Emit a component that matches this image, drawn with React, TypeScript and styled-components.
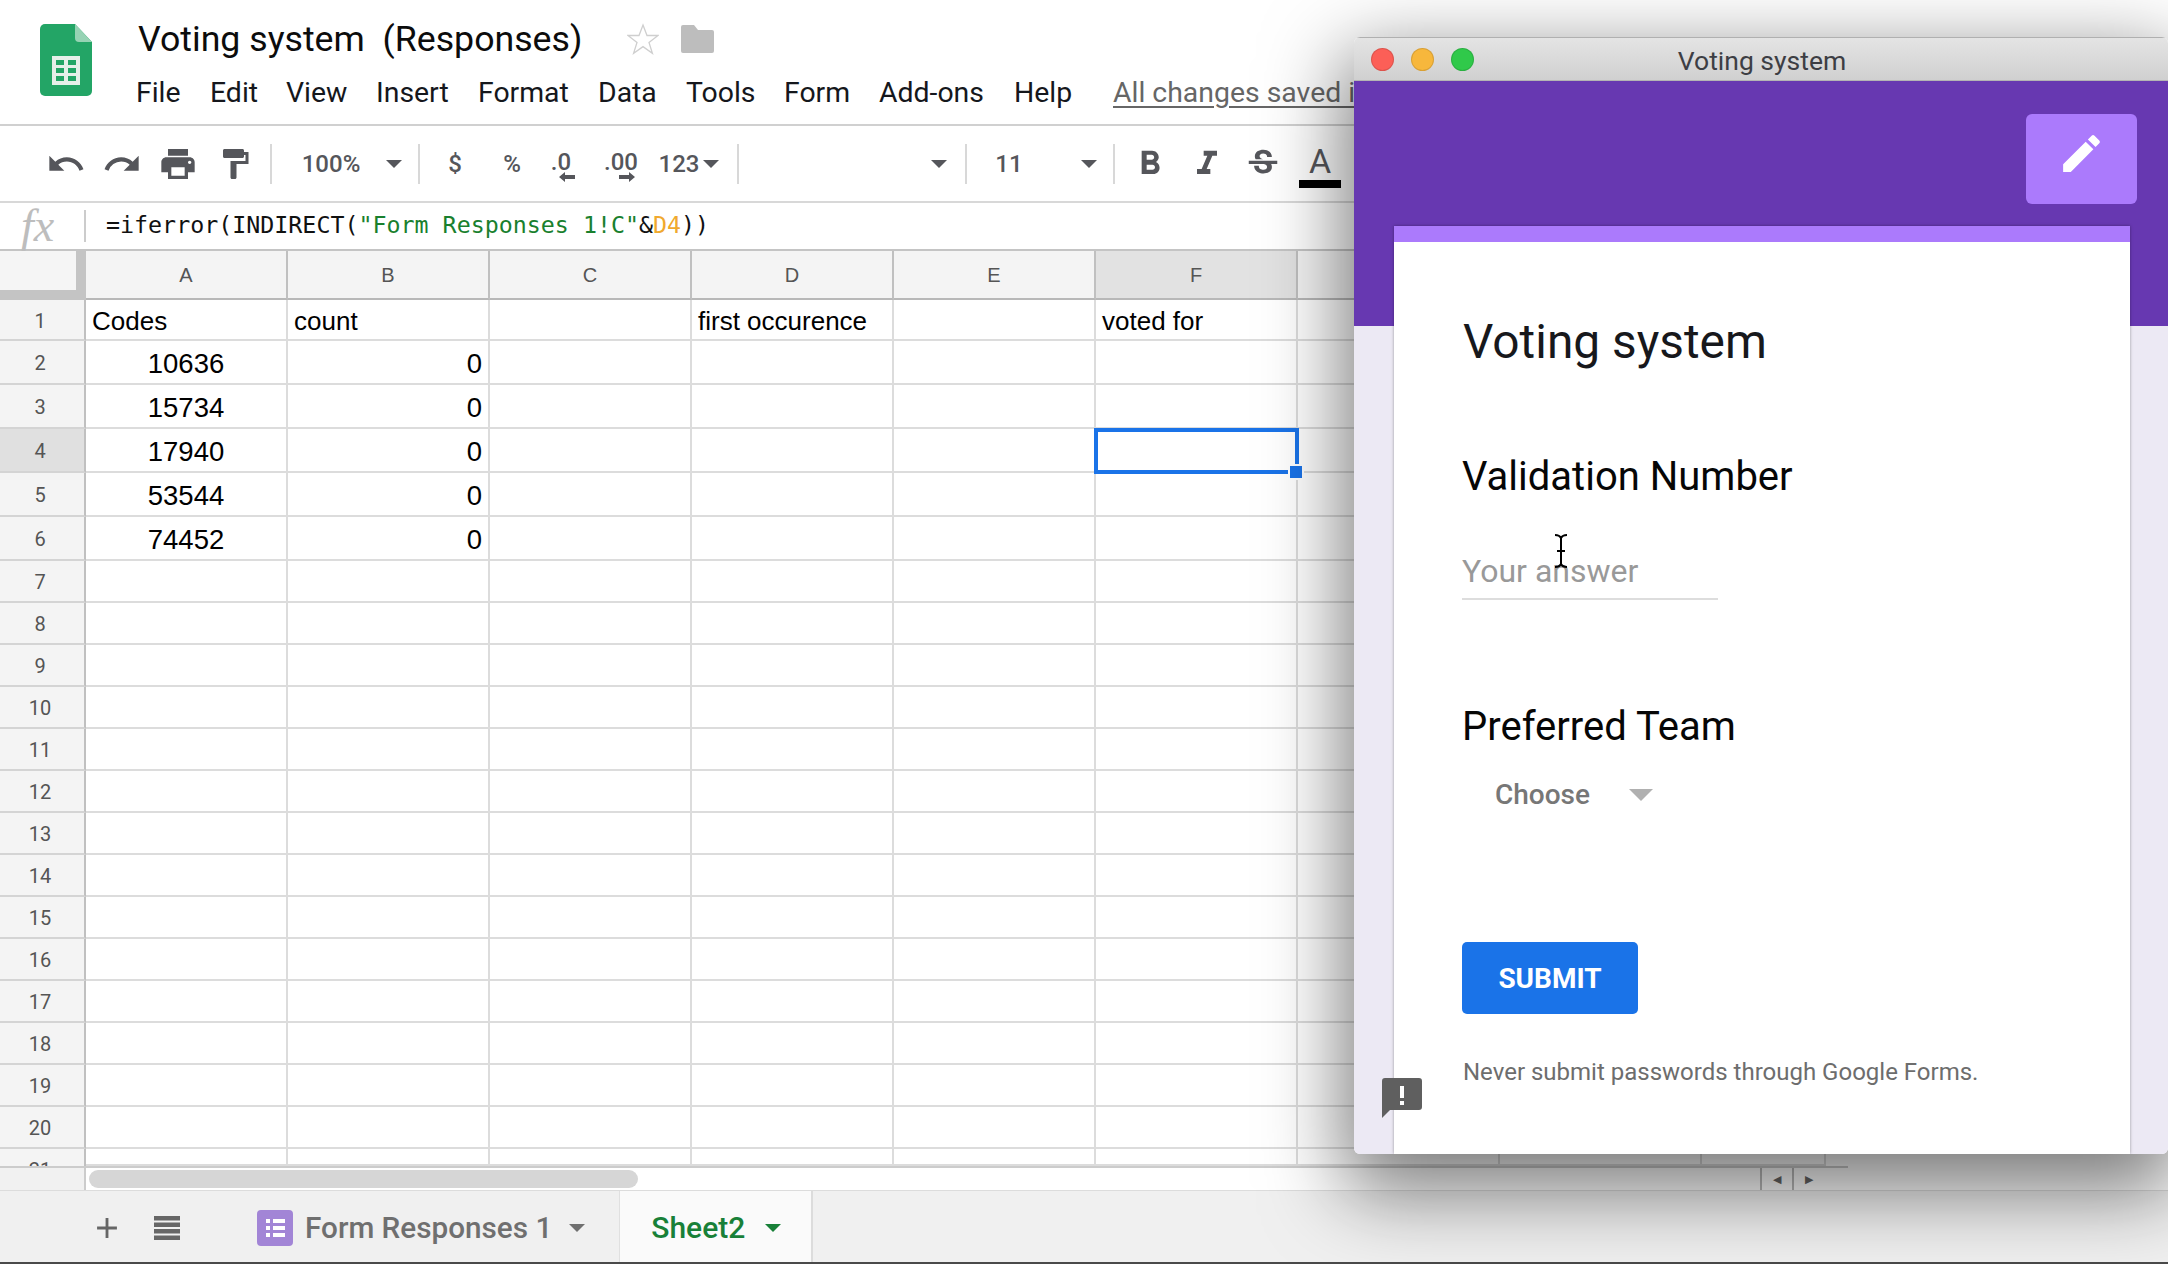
import React from "react";
import styled, { createGlobalStyle } from "styled-components";
import {
  MdUndo, MdRedo, MdPrint, MdFormatPaint, MdFormatBold, MdFormatItalic,
  MdStrikethroughS, MdEdit, MdAdd,
} from "react-icons/md";

const Global = createGlobalStyle`
  html, body { margin: 0; padding: 0; background: #fff; overflow: hidden; }
  * { box-sizing: border-box; }
`;

const Page = styled.div`
  position: relative; width: 2168px; height: 1264px; overflow: hidden;
  font-family: Roboto, "Liberation Sans", sans-serif; color: #111;
  display: flex; flex-direction: column; background: #fff;
`;

/* ---- doc header ---- */
const Header = styled.header`
  height: 126px; flex: none; display: flex; align-items: flex-start;
  padding: 24px 0 0 40px; border-bottom: 2px solid #d0d0d0;
`;
const TitleBlock = styled.div`
  margin-left: 46px; display: flex; flex-direction: column;
`;
const TitleRow = styled.div`
  display: flex; align-items: center; height: 30px;
`;
const DocTitle = styled.div`
  font-size: 35.7px; line-height: 30px; white-space: pre; color: #0c0c0c; width: 489px;
`;
const FolderWrap = styled.div`
  margin-left: 22px; display: flex;
`;
const Menu = styled.nav`
  display: flex; margin-top: 23px; margin-left: -2px; height: 30px; align-items: center;
  font-size: 28.4px; color: #15171c;
`;
const MenuItem = styled.span<{ $w: number }>`
  width: ${(p) => p.$w}px; flex: none;
`;
const Saved = styled.span`
  color: #666; text-decoration: underline; white-space: nowrap; text-underline-offset: 4px;
`;

/* ---- toolbar ---- */
const Toolbar = styled.div`
  height: 77px; flex: none; display: flex; align-items: center; padding-left: 38px;
  border-bottom: 2px solid #d8d8d8; color: #55565b;
`;
const Tool = styled.div<{ $w: number }>`
  width: ${(p) => p.$w}px; flex: none; display: flex; align-items: center; justify-content: center;
  height: 44px; font-size: 24px; font-weight: 500; color: #55565b; white-space: nowrap;
`;
const ToolSep = styled.div<{ $w: number }>`
  width: ${(p) => p.$w}px; flex: none; height: 40px; display: flex; justify-content: center;
  &::before { content: ""; width: 2px; background: #d8d8d8; }
`;
const Caret = styled.div<{ $size?: number; $color?: string }>`
  width: 0; height: 0;
  border-left: ${(p) => p.$size ?? 8}px solid transparent;
  border-right: ${(p) => p.$size ?? 8}px solid transparent;
  border-top: ${(p) => p.$size ?? 8}px solid ${(p) => p.$color ?? "#55565b"};
`;
const Stack = styled.div<{ $shift: number }>`
  display: flex; flex-direction: column; align-items: center; line-height: 24px; margin-top: 4px;
  svg { margin-left: ${(p) => p.$shift}px; margin-top: -2px; }
`;
const ColorA = styled.div`
  display: flex; flex-direction: column; align-items: center; width: 42px; margin-top: 6px;
  font-size: 34px; line-height: 30px; font-weight: 400;
  &::after { content: ""; width: 42px; height: 8px; background: #000; margin-top: 4px; }
`;

/* ---- formula bar ---- */
const FormulaBar = styled.div`
  height: 48px; flex: none; display: flex; align-items: center;
  border-bottom: 2px solid #c4c4c4;
`;
const Fx = styled.div`
  width: 84px; padding-left: 21px; font-family: "Liberation Serif", serif; font-style: italic;
  font-size: 46px; color: #bdbdbd; line-height: 44px;
`;
const FormulaSep = styled.div`
  width: 2px; height: 32px; background: #ccc; margin-right: 20px;
`;
const Formula = styled.div`
  font-family: "DejaVu Sans Mono", monospace; font-size: 23.3px; color: #111; white-space: pre;
  margin-top: -3px;
`;
const Str = styled.span`color: #19802e;`;
const Ref = styled.span`color: #f0a92e;`;

/* ---- grid ---- */
const Grid = styled.div`
  display: flex; flex-direction: column; flex: none; width: 1848px;
`;
const GridRow = styled.div<{ $h: number }>`
  display: flex; height: ${(p) => p.$h}px; overflow: hidden; flex: none;
`;
const CornerCell = styled.div`
  width: 86px; flex: none; background: #f5f5f5; border-right: 10px solid #c4c4c4;
  box-shadow: inset 0 -10px 0 #c4c4c4;
`;
const ColHead = styled.div<{ $w: number; $active?: boolean }>`
  width: ${(p) => p.$w}px; flex: none; display: flex; align-items: center; justify-content: center;
  padding-top: 2px;
  background: ${(p) => (p.$active ? "#e2e2e2" : "#f4f4f4")};
  border-right: 2px solid #c0c0c0; border-bottom: 2px solid #b8b8b8;
  font-size: 20px; color: #555; font-family: "Liberation Sans", sans-serif;
`;
const RowHead = styled.div<{ $h: number; $active?: boolean }>`
  width: 86px; height: ${(p) => p.$h}px; flex: none; display: flex; align-items: center; justify-content: center;
  padding: 2px 4px 0 0;
  background: ${(p) => (p.$active ? "#e0e0e0" : "#f4f4f4")};
  border-right: 2px solid #c0c0c0; border-bottom: 2px solid #d4d4d4;
  font-size: 20px; color: #555;
`;
const Cell = styled.div<{ $w: number; $align?: string; $num?: boolean }>`
  width: ${(p) => p.$w}px; flex: none; display: flex; align-items: center; padding: 4px 6px 0 6px;
  justify-content: ${(p) => p.$align ?? "flex-start"};
  border-right: 2px solid #dcdcdc; border-bottom: 2px solid #dcdcdc;
  font-family: "Liberation Sans", Arial, sans-serif; font-size: ${(p) => (p.$num ? 27.5 : 26)}px; color: #000;
`;
const Selection = styled.div`
  position: absolute; left: 1094px; top: 428px; width: 205px; height: 46px;
  border: 4px solid #1a73e8;
  &::after {
    content: ""; position: absolute; right: -7px; bottom: -8px; width: 12px; height: 12px;
    background: #1a73e8; outline: 2px solid #fff;
  }
`;

/* ---- scroll row + tabs ---- */
const ScrollRow = styled.div`
  height: 24px; flex: none; display: flex; width: 1848px; border-top: 2px solid #ccc;
`;
const ScrollLead = styled.div`
  width: 86px; flex: none; background: #f1f1f1; border-right: 2px solid #ccc;
`;
const ScrollTrack = styled.div`
  width: 1674px; flex: none; padding: 2px 0 0 3px;
`;
const Thumb = styled.div`
  width: 549px; height: 18px; border-radius: 9px; background: #d6d6d6;
`;
const ScrollBtn = styled.div`
  width: 32px; flex: none; display: flex; align-items: center; justify-content: center;
  border-left: 2px solid #bbb; color: #666; font-size: 11px;
`;
const TabBar = styled.div`
  height: 72px; flex: none; display: flex; align-items: center; background: #f0f0f0;
  border-top: 1px solid #dcdcdc; padding: 2px 0 0 90px; color: #666;
`;
const TabIconSlot = styled.div<{ $w: number }>`
  width: ${(p) => p.$w}px; flex: none; display: flex; align-items: center;
`;
const TabText = styled.span`
  margin-left: 12px; font-size: 29.7px; font-weight: 500; color: #6f6f6f; white-space: nowrap;
`;
const ActiveTab = styled.div`
  width: 194px; align-self: stretch; flex: none; display: flex; align-items: center; padding-left: 31px;
  margin-top: -2px; padding-top: 2px;
  background: #fafafa; border-left: 1px solid #e0e0e0; border-right: 2px solid #dcdcdc;
  font-size: 30px; font-weight: 500; color: #188038;
`;
const TabCaretSlot = styled.div<{ $m: number }>`
  margin-left: ${(p) => p.$m}px; display: flex;
`;
const BottomEdge = styled.div`
  height: 2px; flex: none; background: #4a4a4a;
`;

/* ---- form window ---- */
const Win = styled.section`
  position: absolute; left: 1354px; top: 37px; width: 814px; height: 1117px;
  border-radius: 6px; overflow: hidden;
  display: flex; flex-direction: column;
`;
const WinShadow = styled.div`
  position: absolute; left: 1354px; top: 37px; width: 814px; height: 1117px; border-radius: 6px;
  box-shadow: 0 28px 80px 10px rgba(0, 0, 0, 0.52);
`;
const WinBar = styled.div`
  height: 44px; flex: none; display: flex; align-items: center; padding-left: 17px;
  background: linear-gradient(#e4e4e4, #d0d0d0); border-bottom: 1px solid #b4b4b4;
  border-top: 1px solid #b0b0b0;
`;
const Light = styled.i<{ $c: string }>`
  width: 23px; height: 23px; border-radius: 50%; background: ${(p) => p.$c}; margin-right: 17px; flex: none;
  border: 1px solid rgba(0, 0, 0, 0.12);
`;
const WinTitle = styled.div`
  flex: 1; text-align: center; font-size: 26.5px; color: #3d3e44; margin: 2px 0 0 -135px;
`;
const WinBody = styled.div`
  flex: 1; display: flex; flex-direction: column; padding: 0 38px 0 40px; position: relative;
  background: linear-gradient(#6738b1 245px, #ece9f4 245px);
`;
const EditRow = styled.div`
  height: 145px; flex: none; display: flex; justify-content: flex-end; padding: 33px 0 0 0; margin-right: -7px;
`;
const EditBtn = styled.div`
  width: 111px; height: 90px; border-radius: 6px; background: #ab7afc; color: #fff;
  display: flex; align-items: center; justify-content: center; padding-bottom: 12px;
`;
const Card = styled.div`
  flex: 1; display: flex; flex-direction: column; align-items: flex-start; background: #fff;
  border-top: 16px solid #ab7afc; padding-left: 69px;
  box-shadow: 0 0 3px rgba(0, 0, 0, 0.35);
`;
const FormTitle = styled.h1`
  margin: 70px 0 0; font-size: 47.8px; line-height: 60px; font-weight: 400; color: #17181c;
`;
const Question = styled.h2<{ $top: number }>`
  margin: ${(p) => p.$top}px 0 0 -1px; font-size: 40px; line-height: 50px; font-weight: 400; color: #060606;
`;
const Answer = styled.div`
  margin: 47px 0 0 -1px; width: 256px; height: 51px; font-size: 32px; line-height: 44px; color: #999;
  border-bottom: 2px solid #ddd;
`;
const SelectRow = styled.div`
  display: flex; align-items: center; margin: 22px 0 0 32px; height: 40px;
  font-size: 28px; font-weight: 500; color: #777;
`;
const SelectCaret = styled.div`
  margin-left: 39px; display: flex; margin-top: 2px;
`;
const Submit = styled.button`
  margin: 128px 0 0 -1px; width: 176px; height: 72px; border: 0; border-radius: 5px; background: #1a73e8;
  color: #fff; font: 700 28px Roboto, sans-serif; padding: 0;
`;
const Disclaimer = styled.p`
  margin: 44px 0 0; font-size: 24px; line-height: 28px; color: #6d6d6d; white-space: nowrap;
`;
const Feedback = styled.div`
  position: absolute; left: 28px; bottom: 36px; display: flex;
`;
const Cursor = styled.div`
  position: absolute; left: 1550px; top: 534px; display: flex;
`;

const colWidths = [202, 202, 202, 202, 202, 202, 202, 202, 124];
const colNames = ["A", "B", "C", "D", "E", "F", "", "", ""];

const rowData: { n: number; h: number; a?: string; b?: string; d?: string; f?: string; num?: boolean; active?: boolean }[] = [
  { n: 1, h: 41, a: "Codes", b: "count", d: "first occurence", f: "voted for" },
  { n: 2, h: 44, a: "10636", b: "0", num: true },
  { n: 3, h: 44, a: "15734", b: "0", num: true },
  { n: 4, h: 44, a: "17940", b: "0", num: true, active: true },
  { n: 5, h: 44, a: "53544", b: "0", num: true },
  { n: 6, h: 44, a: "74452", b: "0", num: true },
  ...Array.from({ length: 14 }, (_, i) => ({ n: i + 7, h: 42 })),
];

const SheetsLogo = () => (
  <svg width="52" height="72" viewBox="0 0 52 72">
    <path d="M5 0H35L52 18V67a5 5 0 0 1-5 5H5a5 5 0 0 1-5-5V5a5 5 0 0 1 5-5z" fill="#23a566" />
    <path d="M35 0L52 18H39a4 4 0 0 1-4-4z" fill="#96d3b4" />
    <path d="M12 32H40V61H12z" fill="#e6efe9" />
    <path d="M16 36H24V41H16zM28 36H36V41H28zM16 44H24V49H16zM28 44H36V49H28zM16 52H24V57H16zM28 52H36V57H28z" fill="#23a566" />
  </svg>
);

const Star = () => (
  <svg width="32" height="32" viewBox="0 0 32 32">
    <path d="M16 2l4 10.5h11l-9 7 3.4 10.8L16 23.6l-9.4 6.7L10 19.5l-9-7h11z" fill="none" stroke="#cfcfcf" strokeWidth="1.3" />
  </svg>
);

const Folder = () => (
  <svg width="33" height="28" viewBox="0 0 33 28">
    <path d="M2 0h11l4 5h14a2 2 0 0 1 2 2v19a2 2 0 0 1-2 2H2a2 2 0 0 1-2-2V2a2 2 0 0 1 2-2z" fill="#bdbdbd" />
  </svg>
);

const ArrowGlyph = ({ dir }: { dir: "left" | "right" }) => (
  <svg width="16" height="10" viewBox="0 0 16 10">
    {dir === "left" ? <path d="M0 5L6 0V3H16V7H6V10z" fill="#55565b" /> : <path d="M16 5L10 0V3H0V7H10V10z" fill="#55565b" />}
  </svg>
);

const ListIcon = () => (
  <svg width="36" height="36" viewBox="0 0 36 36">
    <rect width="36" height="36" rx="4" fill="#a285d6" />
    <path d="M9 9h4v4H9zM16 9h12v4H16zM9 16h4v4H9zM16 16h12v4H16zM9 23h4v4H9zM16 23h12v4H16z" fill="#fff" />
  </svg>
);

const Burger = () => (
  <svg width="26" height="24" viewBox="0 0 26 24">
    <path d="M0 0h26v4.5H0zM0 6.5h26V11H0zM0 13h26v4.5H0zM0 19.5h26V24H0z" fill="#666" />
  </svg>
);

const FeedbackIcon = () => (
  <svg width="40" height="40" viewBox="0 0 40 40">
    <path d="M3 0h34a3 3 0 0 1 3 3v26a3 3 0 0 1-3 3H8l-8 8V3a3 3 0 0 1 3-3z" fill="#5f5f5f" />
    <path d="M18 8h4v12h-4zM18 23h4v4h-4z" fill="#fff" />
  </svg>
);

const IBeam = () => (
  <svg width="22" height="34" viewBox="0 0 22 34">
    <path d="M5 1c3 0 5 1 6 3 1-2 3-3 6-3M11 4v26M5 33c3 0 5-1 6-3 1 2 3 3 6 3M7 17h8" fill="none" stroke="#000" strokeWidth="2" />
  </svg>
);

export default function App() {
  return (
    <Page>
      <Global />
      <Header>
        <SheetsLogo />
        <TitleBlock>
          <TitleRow>
            <DocTitle>{"Voting system  (Responses)"}</DocTitle>
            <Star />
            <FolderWrap><Folder /></FolderWrap>
          </TitleRow>
          <Menu>
            <MenuItem $w={74}>File</MenuItem>
            <MenuItem $w={76}>Edit</MenuItem>
            <MenuItem $w={90}>View</MenuItem>
            <MenuItem $w={102}>Insert</MenuItem>
            <MenuItem $w={120}>Format</MenuItem>
            <MenuItem $w={88}>Data</MenuItem>
            <MenuItem $w={98}>Tools</MenuItem>
            <MenuItem $w={95}>Form</MenuItem>
            <MenuItem $w={135}>Add-ons</MenuItem>
            <MenuItem $w={99}>Help</MenuItem>
            <Saved>All changes saved in Drive</Saved>
          </Menu>
        </TitleBlock>
      </Header>

      <Toolbar>
        <Tool $w={56}><MdUndo size={40} /></Tool>
        <Tool $w={56}><MdRedo size={40} /></Tool>
        <Tool $w={56}><MdPrint size={40} /></Tool>
        <Tool $w={58}><MdFormatPaint size={36} /></Tool>
        <ToolSep $w={14} />
        <Tool $w={106}>100%</Tool>
        <Tool $w={20}><Caret /></Tool>
        <ToolSep $w={30} />
        <Tool $w={42}>$</Tool>
        <Tool $w={72}>%</Tool>
        <Tool $w={26}><Stack $shift={12}>.0<ArrowGlyph dir="left" /></Stack></Tool>
        <Tool $w={94}><Stack $shift={12}>.00<ArrowGlyph dir="right" /></Stack></Tool>
        <Tool $w={22}>123</Tool>
        <Tool $w={11} />
        <Tool $w={20}><Caret /></Tool>
        <ToolSep $w={34} />
        <Tool $w={174} />
        <Tool $w={20}><Caret /></Tool>
        <ToolSep $w={34} />
        <Tool $w={52}>11</Tool>
        <Tool $w={44} />
        <Tool $w={20}><Caret /></Tool>
        <ToolSep $w={30} />
        <Tool $w={42}><MdFormatBold size={40} /></Tool>
        <Tool $w={72}><MdFormatItalic size={40} /></Tool>
        <Tool $w={40}><MdStrikethroughS size={38} /></Tool>
        <Tool $w={74}><ColorA>A</ColorA></Tool>
      </Toolbar>

      <FormulaBar>
        <Fx>fx</Fx>
        <FormulaSep />
        <Formula>=iferror(INDIRECT(<Str>"Form Responses 1!C"</Str>&amp;<Ref>D4</Ref>))</Formula>
      </FormulaBar>

      <Grid>
        <GridRow $h={49}>
          <CornerCell />
          {colWidths.map((w, i) => (
            <ColHead key={i} $w={w} $active={colNames[i] === "F"}>{colNames[i]}</ColHead>
          ))}
        </GridRow>
        {rowData.map((r) => (
          <GridRow key={r.n} $h={r.h}>
            <RowHead $h={r.h} $active={r.active}>{r.n}</RowHead>
            {colWidths.map((w, i) => {
              const text = i === 0 ? r.a : i === 1 ? r.b : i === 3 ? r.d : i === 5 ? r.f : undefined;
              const align = r.num ? (i === 0 ? "center" : i === 1 ? "flex-end" : undefined) : undefined;
              return <Cell key={i} $w={w} $align={align} $num={r.num}>{text}</Cell>;
            })}
          </GridRow>
        ))}
        <GridRow $h={17}>
          <RowHead $h={42}>21</RowHead>
          {colWidths.map((w, i) => <Cell key={i} $w={w} />)}
        </GridRow>
      </Grid>

      <ScrollRow>
        <ScrollLead />
        <ScrollTrack><Thumb /></ScrollTrack>
        <ScrollBtn>◀</ScrollBtn>
        <ScrollBtn>▶</ScrollBtn>
      </ScrollRow>

      <TabBar>
        <TabIconSlot $w={64}><MdAdd size={34} /></TabIconSlot>
        <TabIconSlot $w={103}><Burger /></TabIconSlot>
        <ListIcon />
        <TabText>Form Responses 1</TabText>
        <TabCaretSlot $m={17}><Caret $size={8} $color="#707070" /></TabCaretSlot>
        <TabCaretSlot $m={34}><span /></TabCaretSlot>
        <ActiveTab>
          Sheet2
          <TabCaretSlot $m={20}><Caret $size={8} $color="#188038" /></TabCaretSlot>
        </ActiveTab>
      </TabBar>
      <BottomEdge />

      <Selection />
      <WinShadow />
      <Win>
        <WinBar>
          <Light $c="#fc5f57" />
          <Light $c="#f7b73c" />
          <Light $c="#30c94a" />
          <WinTitle>Voting system</WinTitle>
        </WinBar>
        <WinBody>
          <EditRow>
            <EditBtn><MdEdit size={49} /></EditBtn>
          </EditRow>
          <Card>
            <FormTitle>Voting system</FormTitle>
            <Question $top={80}>Validation Number</Question>
            <Answer>Your answer</Answer>
            <Question $top={102}>Preferred Team</Question>
            <SelectRow>
              Choose
              <SelectCaret>
                <Caret $size={12} $color="#b0b0b0" />
              </SelectCaret>
            </SelectRow>
            <Submit>SUBMIT</Submit>
            <Disclaimer>Never submit passwords through Google Forms.</Disclaimer>
          </Card>
          <Feedback><FeedbackIcon /></Feedback>
        </WinBody>
      </Win>
      <Cursor><IBeam /></Cursor>
    </Page>
  );
}
